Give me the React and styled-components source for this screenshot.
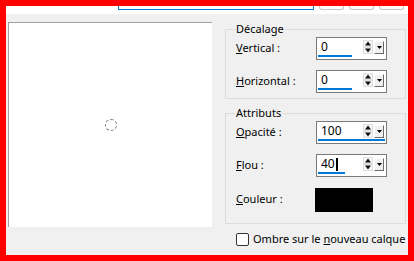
import styled, { createGlobalStyle } from "styled-components";

const Global = createGlobalStyle`
    html, body {
        margin: 0;
        padding: 0;
        background: #fff;
    }
    * {
        box-sizing: border-box;
    }
`

const Frame = styled.div`
    width: 414px;
    height: 261px;
    border: 6px solid #ff0000;
    display: flex;
    flex-direction: column;
    font-family: "Noto Sans", "Open Sans", sans-serif;
    font-size: 11px;
    color: #000;
`
const TopStrip = styled.div`
    height: 8px;
    background: #fff;
    display: flex;
    align-items: flex-start;
    padding-left: 112px;
`
const CutInput = styled.div`
    width: 196px;
    height: 4px;
    border: 1px solid #0078d7;
    border-top: none;
`
const CutButton = styled.div`
    width: 25px;
    height: 4px;
    margin-left: 5px;
    border: 1px solid #c4c4c4;
    border-top: none;
    border-radius: 0 0 3px 3px;
    background: #fdfdfd;
`
const Main = styled.div`
    flex: 1;
    background: #f0f0f0;
    display: flex;
    padding: 8px 0 0 2px;
`
const Preview = styled.div`
    width: 204px;
    height: 205px;
    background: #fff;
    border-top: 1px solid #a0a0a0;
    border-left: 1px solid #a0a0a0;
    display: flex;
    align-items: center;
    justify-content: center;
`
const Ring = styled.div`
    width: 12px;
    height: 12px;
    border-radius: 50%;
    border: 1px dashed #777;
`
const Side = styled.div`
    width: 181px;
    margin-left: 13px;
    margin-top: -1px;
    display: flex;
    flex-direction: column;
`
const Group = styled.fieldset`
    margin: 0 0 ${props => props.gap || 0}px 0;
    border: 1px solid #dcdcdc;
    padding: 0 0 ${props => props.bottom}px 10px;
    display: flex;
    flex-direction: column;
    gap: 10px;
`
const Legend = styled.legend`
    padding: 0 1px;
    margin-left: -1px;
    line-height: 16px;
`
const Row = styled.div`
    display: flex;
    align-items: center;
    height: ${props => props.h || 23}px;
    margin-top: ${props => props.lower || 0}px;
`
const Label = styled.label`
    width: 80px;
    line-height: 16px;
    padding-bottom: 2px;
`
const SpinBox = styled.div`
    width: 71px;
    height: 23px;
    border: 1px solid #7a7a7a;
    background: #fff;
    padding: 1px 1px 2px 1px;
    display: flex;
    flex-direction: column;
`
const SpinRow = styled.div`
    height: 16px;
    display: flex;
    align-items: center;
`
const Value = styled.div`
    flex: 1;
    padding-left: 3px;
    font-size: 12px;
    line-height: 16px;
    display: flex;
    align-items: center;
`
const Caret = styled.span`
    width: 2px;
    height: 13px;
    background: #000;
    margin-left: 1px;
`
const Arrows = styled.svg`
    display: block;
    margin-right: 1px;
`
const DropBtn = styled.div`
    width: 10px;
    height: 13px;
    margin-top: 1px;
    margin-right: 1px;
    background: #f0f0f0;
    border-top: 1px solid #fff;
    border-left: 1px solid #fff;
    border-right: 1px solid #6a6a6a;
    border-bottom: 1px solid #6a6a6a;
    display: flex;
    align-items: center;
    justify-content: center;
`
const Bar = styled.div`
    height: 2px;
    background: #0078d7;
`
const Swatch = styled.div`
    width: 58px;
    height: 24px;
    background: #000;
    margin-left: -1px;
`
const CheckRow = styled.label`
    display: flex;
    align-items: center;
    margin-top: 7px;
    padding-left: 11px;
    line-height: 16px;
    white-space: nowrap;
`
const Box = styled.span`
    width: 13px;
    height: 13px;
    flex: none;
    border: 1px solid #333;
    border-radius: 2px;
    background: #fff;
    margin-right: 4px;
`

const SpinInput = ({ value, min, max, caret }) => {
    const frac = (Number(value) - min) / (max - min);
    return (
        <SpinBox>
            <SpinRow>
                <Value>
                    {value}
                    {caret && <Caret />}
                </Value>
                <Arrows width="10" height="14" viewBox="0 0 10 14">
                    <rect x="0.5" y="0.5" width="9" height="6" fill="#f4f4f4" stroke="#e0e0e0" />
                    <rect x="0.5" y="7.5" width="9" height="6" fill="#f4f4f4" stroke="#e0e0e0" />
                    <path d="M5 1.5 L8 5.5 L2 5.5 Z" fill="#111" />
                    <path d="M2 8.5 L8 8.5 L5 12.5 Z" fill="#111" />
                </Arrows>
                <DropBtn>
                    <svg width="5" height="3" viewBox="0 0 5 3">
                        <path d="M0 0 H5 L2.5 3 Z" fill="#000" />
                    </svg>
                </DropBtn>
            </SpinRow>
            <Bar style={{ width: `${Math.round(frac * 100)}%` }} />
        </SpinBox>
    )
}

const App = () => {
    return (
        <>
            <Global />
            <Frame>
                <TopStrip>
                    <CutInput />
                    <CutButton />
                    <CutButton />
                    <CutButton />
                </TopStrip>
                <Main>
                    <Preview>
                        <Ring />
                    </Preview>
                    <Side>
                        <Group bottom={5} gap={6}>
                            <Legend>Décalage</Legend>
                            <Row>
                                <Label><u>V</u>ertical :</Label>
                                <SpinInput value="0" min={-100} max={100} />
                            </Row>
                            <Row>
                                <Label><u>H</u>orizontal :</Label>
                                <SpinInput value="0" min={-100} max={100} />
                            </Row>
                        </Group>
                        <Group bottom={11}>
                            <Legend>Attributs</Legend>
                            <Row>
                                <Label><u>O</u>pacité :</Label>
                                <SpinInput value="100" min={0} max={100} />
                            </Row>
                            <Row>
                                <Label><u>F</u>lou :</Label>
                                <SpinInput value="40" min={0} max={100} caret />
                            </Row>
                            <Row h={24} lower={1}>
                                <Label><u>C</u>ouleur :</Label>
                                <Swatch />
                            </Row>
                        </Group>
                        <CheckRow>
                            <Box />
                            <span>Ombre sur le <u>n</u>ouveau calque</span>
                        </CheckRow>
                    </Side>
                </Main>
            </Frame>
        </>
    )
}

export default App
